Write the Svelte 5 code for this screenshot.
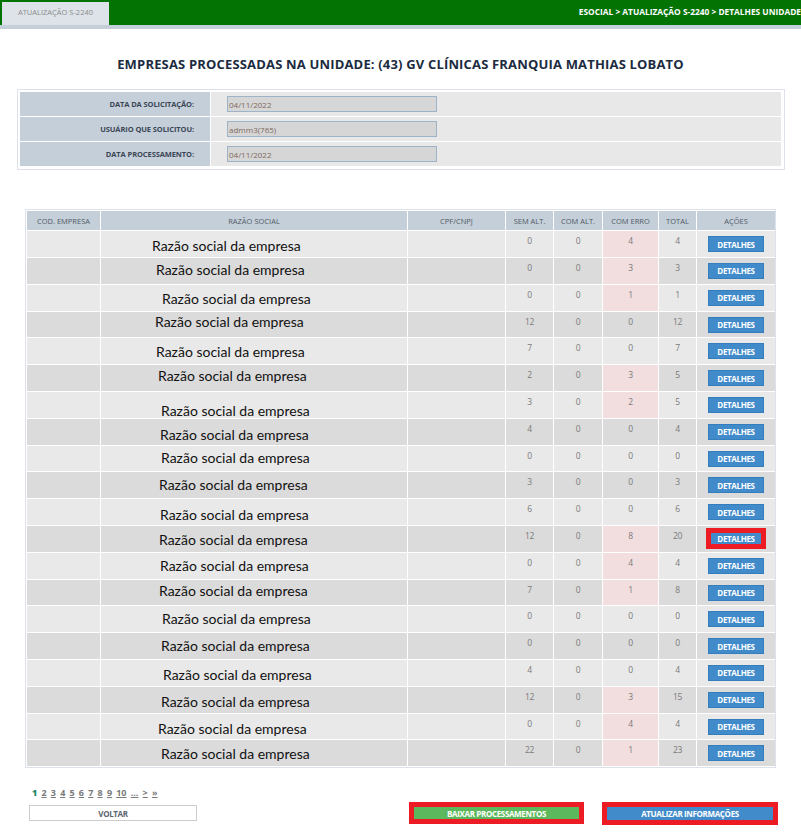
<script>
  // dx/dy: where the pasted company name sits in its row
  const rows = [
    { dx: 51, dy: 2, sem: 0, com: 0, erro: 4, total: 4 },
    { dx: 55, dy: -1, sem: 0, com: 0, erro: 3, total: 3 },
    { dx: 61, dy: 1, sem: 0, com: 0, erro: 1, total: 1 },
    { dx: 54, dy: -3, sem: 12, com: 0, erro: 0, total: 12 },
    { dx: 55, dy: 1, sem: 7, com: 0, erro: 0, total: 7 },
    { dx: 57, dy: -2, sem: 2, com: 0, erro: 3, total: 5 },
    { dx: 60, dy: 6, sem: 3, com: 0, erro: 2, total: 5 },
    { dx: 59, dy: 3, sem: 4, com: 0, erro: 0, total: 4 },
    { dx: 60, dy: -1, sem: 0, com: 0, erro: 0, total: 0 },
    { dx: 58, dy: 0, sem: 3, com: 0, erro: 0, total: 3 },
    { dx: 59, dy: 3, sem: 6, com: 0, erro: 0, total: 6 },
    { dx: 58, dy: 1, sem: 12, com: 0, erro: 8, total: 20, marked: true },
    { dx: 59, dy: 0, sem: 0, com: 0, erro: 4, total: 4 },
    { dx: 58, dy: -2, sem: 7, com: 0, erro: 1, total: 8 },
    { dx: 61, dy: 0, sem: 0, com: 0, erro: 0, total: 0 },
    { dx: 60, dy: 0, sem: 0, com: 0, erro: 0, total: 0 },
    { dx: 62, dy: 2, sem: 4, com: 0, erro: 0, total: 4 },
    { dx: 60, dy: 2, sem: 12, com: 0, erro: 3, total: 15 },
    { dx: 57, dy: 2, sem: 0, com: 0, erro: 4, total: 4 },
    { dx: 60, dy: 1, sem: 22, com: 0, erro: 1, total: 23 }
  ];

  const info = [
    { label: 'DATA DA SOLICITAÇÃO:', value: '04/11/2022' },
    { label: 'USUÁRIO QUE SOLICITOU:', value: 'admm3(765)' },
    { label: 'DATA PROCESSAMENTO:', value: '04/11/2022' }
  ];

  const pages = ['2', '3', '4', '5', '6', '7', '8', '9', '10', '...', '>', '»'];
</script>

<header class="topbar">
  <div class="tab">ATUALIZAÇÃO S-2240</div>
  <div class="crumbs">ESOCIAL &gt; ATUALIZAÇÃO S-2240 &gt; DETALHES UNIDADE</div>
</header>

<h1>EMPRESAS PROCESSADAS NA UNIDADE: (43) GV CLÍNICAS FRANQUIA MATHIAS LOBATO</h1>

<div class="info">
  {#each info as item}
    <div class="info-row">
      <div class="info-label">{item.label}</div>
      <div class="info-value"><input value={item.value} disabled /></div>
    </div>
  {/each}
</div>

<div class="table-wrap">
  <table>
    <thead>
      <tr>
        <th class="c-cod">COD. EMPRESA</th>
        <th class="c-razao">RAZÃO SOCIAL</th>
        <th class="c-cpf">CPF/CNPJ</th>
        <th class="c-sem">SEM ALT.</th>
        <th class="c-com">COM ALT.</th>
        <th class="c-erro">COM ERRO</th>
        <th class="c-total">TOTAL</th>
        <th class="c-acoes">AÇÕES</th>
      </tr>
    </thead>
    <tbody>
      {#each rows as row}
        <tr>
          <td></td>
          <td class="razao"><span style="margin-left: {row.dx}px; transform: translateY({row.dy}px)">Razão social da empresa</span></td>
          <td></td>
          <td class="num">{row.sem}</td>
          <td class="num">{row.com}</td>
          <td class="num" class:has-error={row.erro > 0}>{row.erro}</td>
          <td class="num">{row.total}</td>
          <td class="acao"><button class="btn-detalhes" class:marked={row.marked}>DETALHES</button></td>
        </tr>
      {/each}
    </tbody>
  </table>
</div>

<nav class="pager">
  <b>1</b>
  {#each pages as page}
    <a href="#p">{page}</a>
  {/each}
</nav>

<footer class="actions">
  <button class="voltar">VOLTAR</button>
  <button class="baixar">BAIXAR PROCESSAMENTOS</button>
  <button class="atualizar">ATUALIZAR INFORMAÇÕES</button>
</footer>

<style>
  :global(body) {
    margin: 0;
    background: #fff;
    font-family: "Open Sans", "DejaVu Sans", sans-serif;
  }

  .topbar {
    display: flex;
    justify-content: space-between;
    align-items: center;
    height: 25px;
    background: #037303;
    border-bottom: 4px solid #c5cfd9;
    overflow: hidden;
  }

  .tab {
    align-self: flex-end;
    width: 107px;
    height: 23px;
    margin-left: 2px;
    background: #dde3e8;
    color: #8c8c8c;
    font-size: 7.5px;
    line-height: 21px;
    text-align: center;
  }

  .crumbs {
    color: #fff;
    font-size: 8.35px;
    font-weight: 700;
    white-space: nowrap;
    padding-bottom: 2px;
  }

  h1 {
    margin: 26px 0 0;
    height: 34px;
    color: #1c2b3f;
    font-size: 13px;
    font-weight: 700;
    letter-spacing: 0.17px;
    line-height: 18px;
    text-align: center;
  }

  .info {
    display: flex;
    flex-direction: column;
    gap: 1px;
    width: 761px;
    margin-left: 17px;
    padding: 2px 3px 3px 2px;
    border: 1px solid #dde1ea;
  }

  .info-row {
    display: flex;
    height: 24px;
    gap: 1px;
  }

  .info-label {
    box-sizing: border-box;
    width: 190px;
    padding-right: 16px;
    background: #c5cfd9;
    color: #3a4656;
    font-size: 7.5px;
    font-weight: 700;
    letter-spacing: -0.1px;
    line-height: 24px;
    text-align: right;
  }

  .info-value {
    flex: 1;
    display: flex;
    align-items: center;
    padding-left: 16px;
    background: #e8e8e8;
  }

  input {
    box-sizing: border-box;
    width: 210px;
    height: 16px;
    padding: 0 1px;
    border: 1px solid #9db4c8;
    background: #d6d6d6;
    color: #7d6a60;
    font: 8px "Open Sans", sans-serif;
    opacity: 1;
  }

  .table-wrap {
    margin: 39px 0 0 25px;
    width: 749px;
    padding: 0;
    border: 1px solid #dde1ea;
  }

  table {
    width: 749px;
    table-layout: fixed;
    border-collapse: separate;
    border-spacing: 1px;
    margin: 0;
  }

  th {
    height: 19.3px;
    padding: 0;
    background: #c5cfd9;
    color: #4f5a66;
    font-size: 7.5px;
    font-weight: 400;
  }

  .c-cod { width: 73px; }
  .c-razao { width: 306px; }
  .c-cpf { width: 97px; }
  .c-sem { width: 47px; }
  .c-com { width: 48px; }
  .c-erro { width: 55px; }
  .c-total { width: 37px; }
  .c-acoes { width: 78px; }

  td {
    box-sizing: border-box;
    height: 25.8px;
    padding: 0;
    background: #e9e9e9;
    font-size: 8.5px;
    line-height: 12px;
  }

  tbody tr:nth-child(even) td {
    background: #dbdbdb;
  }

  tbody tr td.has-error,
  tbody tr:nth-child(even) td.has-error {
    background: #f2dede;
  }

  .razao span {
    display: block;
    width: fit-content;
    color: #111;
    font-family: Lato, sans-serif;
    font-size: 14px;
    line-height: 14px;
    white-space: nowrap;
  }

  .num {
    padding-bottom: 6px;
    color: #7a7a7a;
    letter-spacing: -0.3px;
    text-align: center;
  }

  .acao {
    text-align: center;
  }

  button {
    box-sizing: border-box;
    padding: 0;
    font-family: inherit;
    font-weight: 700;
    font-size: 8px;
    letter-spacing: -0.35px;
    cursor: pointer;
  }

  .btn-detalhes {
    display: block;
    width: 56px;
    height: 16px;
    margin: 0 auto;
    background: #428bca;
    border: 1px solid #357ebd;
    color: #fff;
  }

  .btn-detalhes.marked {
    width: 60px;
    height: 21px;
    background: #428bca;
    border: 5px solid #ed1c24;
  }

  .pager {
    display: flex;
    gap: 4.2px;
    height: 12px;
    margin: 19px 0 0 32px;
    color: #5c6672;
    font-size: 9px;
    font-weight: 700;
    line-height: 12px;
  }

  .pager b {
    color: #1a8a6a;
  }

  .pager a {
    color: #7a7a7a;
  }

  .actions {
    display: flex;
    align-items: center;
    margin: 2px 0 0 29px;
    height: 24px;
  }

  .voltar {
    width: 168px;
    height: 16px;
    background: #fff;
    border: 1px solid #ccc;
    color: #5c6672;
  }

  .baixar {
    width: 175px;
    height: 22px;
    margin-left: 212px;
    background: #5cb85c;
    border: 5px solid #ed1c24;
    color: #fff;
  }

  .atualizar {
    width: 176px;
    height: 23px;
    margin-left: 18px;
    background: #428bca;
    border: 5px solid #ed1c24;
    color: #fff;
  }
</style>
